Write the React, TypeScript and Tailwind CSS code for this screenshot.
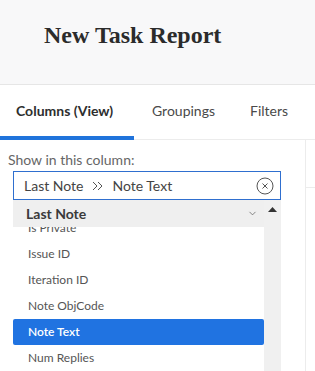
import { ChevronDown } from 'lucide-react';

const items = ['Is Private', 'Issue ID', 'Iteration ID', 'Note ObjCode', 'Note Text', 'Num Replies', 'Owner ID'];

export default function App() {
  return (
    <div className="w-[315px] h-[371px] overflow-hidden bg-white" style={{ fontFamily: 'Lato, "Open Sans", sans-serif' }}>
      {/* header */}
      <div className="h-[85px] bg-[#f8f8f9] border-b border-[#e6e6e6] pl-[44px] pt-[20px]">
        <h1 className="text-[24px] leading-[30px] font-bold text-[#2b2b2b]" style={{ fontFamily: '"Liberation Serif", serif' }}>
          New Task Report
        </h1>
      </div>

      {/* tabs */}
      <div className="h-[55px] flex border-b border-[#ececec] text-[14px] text-[#4a4a4a] pb-[4px]">
        <div className="w-[134px] relative flex items-center pl-[16px] font-bold text-[#2e2e2e]">
          Columns (View)
          <div className="absolute left-0 right-0 bottom-[-5px] h-[4px] bg-[#2073db]" />
        </div>
        <div className="flex items-center pl-[18px]">Groupings</div>
        <div className="flex items-center pl-[35px]">Filters</div>
      </div>

      <div className="flex h-[231px]">
        {/* left panel */}
        <div className="w-[306px] border-r border-[#ececec] pt-[12px]">
          <div className="pl-[8px] text-[14px] leading-[16px] text-[#666]">Show in this column:</div>
          <div className="ml-[13px] mt-[3px] w-[268px] h-[29px] border border-[#2f6fcf] flex items-center pl-[10px] pr-[6px] text-[14px] text-[#444]">
            <span>Last Note</span>
            <svg width="12" height="10" viewBox="0 0 12 10" className="ml-[9px] mr-[8px]" fill="none" stroke="#555" strokeWidth="1">
              <path d="M1 1l4 4-4 4M6 1l4 4-4 4" />
            </svg>
            <span>Note Text</span>
            <svg width="18" height="18" viewBox="0 0 18 18" className="ml-auto" fill="none" stroke="#555" strokeWidth="1">
              <circle cx="9" cy="9" r="8" />
              <path d="M6.5 6.5l5 5M11.5 6.5l-5 5" />
            </svg>
          </div>

          {/* dropdown */}
          <div className="ml-[13px] w-[268px] h-[172px] flex">
            <div className="w-[251px] flex flex-col">
              <div className="h-[27px] bg-[#efefef] flex items-center pl-[13px] pr-[6px] text-[14px] font-bold text-[#3a3a3a]">
                Last Note
                <ChevronDown className="ml-auto w-[11px] h-[11px] text-[#555]" strokeWidth={1.5} />
              </div>
              <div className="flex-1 overflow-hidden">
                <div className="mt-[-12px] flex flex-col">
                  {items.map((it) => (
                    <div
                      key={it}
                      className={
                        it === 'Note Text'
                          ? 'h-[26px] flex items-center pl-[15px] text-[12px] rounded-[2px] bg-[#2073e1] text-white font-semibold'
                          : 'h-[26px] flex items-center pl-[15px] text-[12px] text-[#555]'
                      }
                    >
                      {it}
                    </div>
                  ))}
                </div>
              </div>
            </div>
            <div className="w-[17px] bg-[#f0f0f0] flex justify-center pt-[7px]">
              <svg width="9" height="5" viewBox="0 0 9 5">
                <path d="M0 5L4.5 0L9 5z" fill="#333" />
              </svg>
            </div>
          </div>
        </div>

        {/* right panel */}
        <div className="flex-1">
          <div className="h-[48px] border-b border-[#ececec]" />
        </div>
      </div>
    </div>
  );
}
